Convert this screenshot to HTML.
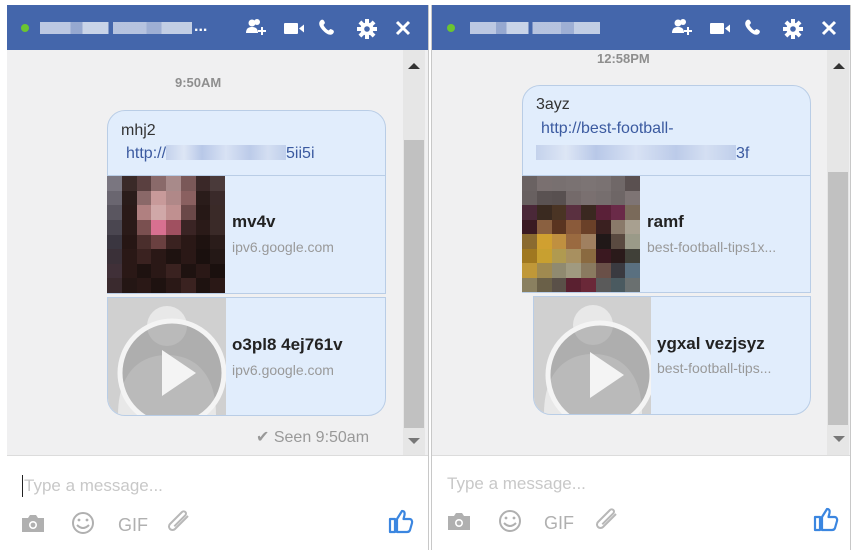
<!DOCTYPE html>
<html><head><meta charset="utf-8"><style>
*{margin:0;padding:0;box-sizing:border-box}
body{width:857px;height:550px;background:#fff;position:relative;overflow:hidden;font-family:"Liberation Sans",Arial,sans-serif}
.a{position:absolute}
.hdr{background:#4466ab;height:45px;top:5px}
.dot{width:8px;height:8px;border-radius:50%;background:#6bc531;top:24px}
.blur{height:12px;top:22px;background:linear-gradient(90deg,#c9d3e8 0 20%,#9fb0d4 20% 28%,#d8e0ef 28% 45%,#4466ab 45% 48%,#c2cde5 48% 70%,#a8b7d8 70% 80%,#d0d9eb 80%);opacity:.9}
.body{background:#f0f0f1;top:50px;height:405px}
.inp{background:#fff;top:455px;height:95px;border-top:1px solid #dcdcdc}
.bub{background:#e1edfc;border:1px solid #b9cde6}
.t{font-size:16px;color:#333}
.lnk{font-size:16px;color:#3b5aa0}
.ttl{font-size:17px;font-weight:bold;color:#222}
.dom{font-size:14px;color:#999}
.ts{font-size:13px;font-weight:bold;color:#8e8e8e}
.sb{background:#e6e6e6;width:22px}
.thumb{background:#c1c1c1}
.ph{font-size:17px;color:#c8c8c8}
.vid{background:#d0d0d0;overflow:hidden}
.pix{display:grid;grid-template-columns:repeat(8,1fr);overflow:hidden}
.pix div{width:100%;height:100%}
.bl{background:linear-gradient(90deg,#c4d2ec,#dde6f5 15%,#b8c8e8 30%,#d8e2f4 50%,#bccbe9 70%,#d4dff2 85%,#c0cfeb)}
</style></head><body>

<!-- LEFT PANEL -->
<div class="a hdr" style="left:7px;width:421px"></div>
<div class="a dot" style="left:21px"></div>
<div class="a blur" style="left:40px;width:152px"></div>
<div class="a" style="left:194px;top:18px;color:#fff;font-weight:bold;font-size:16px">...</div>
<svg class="a" style="left:244px;top:17px" width="180" height="24" viewBox="0 0 180 24">
 <g fill="#fff">
 <circle cx="8" cy="6" r="3.5"/><path d="M2 16c0-5 3-6 6-6s6 1 6 6z"/><circle cx="13" cy="5" r="3"/><rect x="14" y="13" width="8" height="2"/><rect x="17" y="10" width="2" height="8"/>
 <rect x="40" y="6" width="14" height="11" rx="1"/><path d="M55 11.5l5-4v8z"/>
 <path d="M77 3c2-1 3 0 4 3l-1.5 2c1 2 3 4.5 5 5.5l2-1.5c3 1 4 2 3 4-2 3-6 2-10-2s-6-8-2.5-11z"/>
 <g transform="translate(123,12)"><circle r="6.5"/><rect x="-2" y="-10" width="4" height="20"/><rect x="-10" y="-2" width="20" height="4"/><g transform="rotate(45)"><rect x="-2" y="-10" width="4" height="20"/><rect x="-10" y="-2" width="20" height="4"/></g></g>
 </g>
 <circle cx="123" cy="12" r="2.8" fill="#4466ab"/>
 <path d="M153 5l12 12M165 5l-12 12" stroke="#fff" stroke-width="3"/>
</svg>
<div class="a body" style="left:7px;width:421px"></div>
<div class="a ts" style="left:175px;top:75px">9:50AM</div>
<div class="a sb" style="left:403px;top:50px;height:405px"></div>
<div class="a thumb" style="left:404px;top:140px;width:20px;height:288px"></div>
<svg class="a" style="left:408px;top:62px" width="12" height="8"><path d="M0 7L6 1L12 7z" fill="#333"/></svg>
<svg class="a" style="left:408px;top:437px" width="12" height="8"><path d="M0 1L6 7L12 1z" fill="#777"/></svg>

<div class="a bub" style="left:107px;top:110px;width:279px;height:67px;border-radius:18px 18px 0 0"></div>
<div class="a t" style="left:121px;top:122px">mhj2</div>
<div class="a lnk" style="left:126px;top:145px">http://<span class="bl" style="display:inline-block;width:120px;height:15px;vertical-align:-2px"></span>5ii5i</div>
<div class="a bub" style="left:107px;top:175px;width:279px;height:119px"></div>
<div class="a pix" style="left:107px;top:176px;width:118px;height:117px;grid-template-rows:repeat(8,1fr)">
<div style="background:#7a7680"></div><div style="background:#3a2a28"></div><div style="background:#5a4040"></div><div style="background:#8a6a6a"></div><div style="background:#a88a8a"></div><div style="background:#7a5858"></div><div style="background:#3a2828"></div><div style="background:#4a3a3a"></div>
<div style="background:#6a6670"></div><div style="background:#2a1c1a"></div><div style="background:#8a6868"></div><div style="background:#c89a9a"></div><div style="background:#b08888"></div><div style="background:#8a6060"></div><div style="background:#2a1c1a"></div><div style="background:#3a2a2a"></div>
<div style="background:#5a5660"></div><div style="background:#2a1a18"></div><div style="background:#b08080"></div><div style="background:#d0a8a8"></div><div style="background:#c09090"></div><div style="background:#6a4848"></div><div style="background:#261816"></div><div style="background:#3a2a28"></div>
<div style="background:#4a4650"></div><div style="background:#2a1a18"></div><div style="background:#7a5050"></div><div style="background:#d87090"></div><div style="background:#a05060"></div><div style="background:#3a2424"></div><div style="background:#2a1a18"></div><div style="background:#3a2a28"></div>
<div style="background:#3a3640"></div><div style="background:#261614"></div><div style="background:#4a2e2c"></div><div style="background:#6a4040"></div><div style="background:#3a2220"></div><div style="background:#2a1816"></div><div style="background:#1e1210"></div><div style="background:#2a1c1a"></div>
<div style="background:#3a3038"></div><div style="background:#2a1816"></div><div style="background:#3a2220"></div><div style="background:#2a1816"></div><div style="background:#1e1210"></div><div style="background:#2a1816"></div><div style="background:#1a100e"></div><div style="background:#241816"></div>
<div style="background:#403038"></div><div style="background:#2a1816"></div><div style="background:#1e1210"></div><div style="background:#2a1816"></div><div style="background:#3a2220"></div><div style="background:#1e1210"></div><div style="background:#2a1816"></div><div style="background:#1a100e"></div>
<div style="background:#3a2a2e"></div><div style="background:#241614"></div><div style="background:#2a1816"></div><div style="background:#1e1210"></div><div style="background:#2a1816"></div><div style="background:#3a2220"></div><div style="background:#1e1210"></div><div style="background:#2a1816"></div>
</div>
<div class="a ttl" style="left:232px;top:212px">mv4v</div>
<div class="a dom" style="left:232px;top:239px">ipv6.google.com</div>

<div class="a bub" style="left:107px;top:297px;width:279px;height:119px;border-radius:0 0 18px 18px"></div>
<div class="a vid" style="left:108px;top:298px;width:118px;height:117px;border-radius:0 0 0 17px">
 <svg width="118" height="117"><circle cx="59" cy="28" r="20" fill="#e8e8e8"/><path d="M10 117c0-40 20-60 49-60s49 20 49 60z" fill="#e8e8e8"/>
 <circle cx="64" cy="75" r="52" fill="rgba(140,140,140,.5)" stroke="#f4f4f4" stroke-width="5"/><path d="M54 52v46l34-23z" fill="#f4f4f4"/></svg>
</div>
<div class="a ttl" style="left:232px;top:335px">o3pl8 4ej761v</div>
<div class="a dom" style="left:232px;top:362px">ipv6.google.com</div>
<div class="a" style="left:256px;top:427px;font-size:16px;color:#999">✔ Seen 9:50am</div>

<div class="a inp" style="left:7px;width:421px"></div>
<div class="a" style="left:22px;top:475px;width:1px;height:22px;background:#222"></div>
<div class="a ph" style="left:24px;top:476px">Type a message...</div>
<svg class="a" style="left:20px;top:510px" width="180" height="26">
 <g fill="#b0b0b0"><path d="M2 8h6l2-3h6l2 3h6v14H2z"/></g><circle cx="13" cy="15" r="4" fill="#fff"/><circle cx="13" cy="15" r="2.4" fill="#b0b0b0"/>
 <circle cx="63" cy="13" r="10" fill="none" stroke="#b0b0b0" stroke-width="2"/><circle cx="59" cy="10" r="1.4" fill="#b0b0b0"/><circle cx="67" cy="10" r="1.4" fill="#b0b0b0"/><path d="M57 15q6 6 12 0" fill="none" stroke="#b0b0b0" stroke-width="2"/>
 <text x="98" y="21" font-family="Liberation Sans Narrow,Liberation Sans,sans-serif" font-size="18" fill="#b0b0b0">GIF</text>
 <path d="M168 6l-13 13a3.5 3.5 0 0 1-5-5l12-12a2.3 2.3 0 0 1 3.3 3.3l-11 11" fill="none" stroke="#b8b8b8" stroke-width="2"/>
</svg>
<svg class="a" style="left:388px;top:508px" width="26" height="26"><path d="M2 11h5v13H2zM9 11l5-8c2 0 3 1 2.5 4l-1 4h6c2 0 3 2 2.5 4l-2 7c-.5 1.5-1.5 2-3 2H9z" fill="none" stroke="#3b86e0" stroke-width="2.2" stroke-linejoin="round"/></svg>
<div class="a" style="left:428px;top:5px;width:1px;height:545px;background:#c8c8c8"></div>

<!-- RIGHT PANEL -->
<div class="a" style="left:431px;top:5px;width:1px;height:545px;background:#c8c8c8"></div>
<div class="a hdr" style="left:432px;width:418px"></div>
<div class="a dot" style="left:447px"></div>
<div class="a blur" style="left:470px;width:130px"></div>
<svg class="a" style="left:670px;top:17px" width="180" height="24" viewBox="0 0 180 24">
 <g fill="#fff">
 <circle cx="8" cy="6" r="3.5"/><path d="M2 16c0-5 3-6 6-6s6 1 6 6z"/><circle cx="13" cy="5" r="3"/><rect x="14" y="13" width="8" height="2"/><rect x="17" y="10" width="2" height="8"/>
 <rect x="40" y="6" width="14" height="11" rx="1"/><path d="M55 11.5l5-4v8z"/>
 <path d="M77 3c2-1 3 0 4 3l-1.5 2c1 2 3 4.5 5 5.5l2-1.5c3 1 4 2 3 4-2 3-6 2-10-2s-6-8-2.5-11z"/>
 <g transform="translate(123,12)"><circle r="6.5"/><rect x="-2" y="-10" width="4" height="20"/><rect x="-10" y="-2" width="20" height="4"/><g transform="rotate(45)"><rect x="-2" y="-10" width="4" height="20"/><rect x="-10" y="-2" width="20" height="4"/></g></g>
 </g>
 <circle cx="123" cy="12" r="2.8" fill="#4466ab"/>
 <path d="M153 5l12 12M165 5l-12 12" stroke="#fff" stroke-width="3"/>
</svg>
<div class="a body" style="left:432px;width:418px"></div>
<div class="a ts" style="left:597px;top:51px">12:58PM</div>
<div class="a sb" style="left:827px;top:50px;height:405px"></div>
<div class="a thumb" style="left:828px;top:172px;width:20px;height:253px"></div>
<svg class="a" style="left:833px;top:62px" width="12" height="8"><path d="M0 7L6 1L12 7z" fill="#333"/></svg>
<svg class="a" style="left:833px;top:435px" width="12" height="8"><path d="M0 1L6 7L12 1z" fill="#777"/></svg>

<div class="a bub" style="left:522px;top:85px;width:289px;height:92px;border-radius:18px 18px 0 0"></div>
<div class="a t" style="left:536px;top:96px">3ayz</div>
<div class="a lnk" style="left:541px;top:120px">http://best-football-</div>
<div class="a lnk" style="left:536px;top:145px"><span class="bl" style="display:inline-block;width:200px;height:15px;vertical-align:-2px"></span>3f</div>
<div class="a bub" style="left:522px;top:175px;width:289px;height:118px"></div>
<div class="a pix" style="left:522px;top:176px;width:118px;height:116px;grid-template-rows:repeat(8,1fr)">
<div style="background:#6a6262"></div><div style="background:#7a7070"></div><div style="background:#787070"></div><div style="background:#7a7272"></div><div style="background:#7c7474"></div><div style="background:#7a7272"></div><div style="background:#706868"></div><div style="background:#5a5050"></div>
<div style="background:#686060"></div><div style="background:#5a5252"></div><div style="background:#585050"></div><div style="background:#746a6a"></div><div style="background:#7a7070"></div><div style="background:#766e6e"></div><div style="background:#6e6666"></div><div style="background:#7e7474"></div>
<div style="background:#4a2838"></div><div style="background:#3a2a20"></div><div style="background:#4a3424"></div><div style="background:#5a3040"></div><div style="background:#3a2820"></div><div style="background:#5a2038"></div><div style="background:#6a2a48"></div><div style="background:#7a6a5a"></div>
<div style="background:#3a1a22"></div><div style="background:#8a6040"></div><div style="background:#5a3420"></div><div style="background:#8a5a3a"></div><div style="background:#6a4028"></div><div style="background:#3a2020"></div><div style="background:#8a7a6a"></div><div style="background:#a8a090"></div>
<div style="background:#8a6a30"></div><div style="background:#d0a030"></div><div style="background:#c09040"></div><div style="background:#9a6a40"></div><div style="background:#a08060"></div><div style="background:#201818"></div><div style="background:#5a4a40"></div><div style="background:#9a9a88"></div>
<div style="background:#a07820"></div><div style="background:#c8a030"></div><div style="background:#b09a50"></div><div style="background:#a89060"></div><div style="background:#8a6a40"></div><div style="background:#3a1820"></div><div style="background:#2a1a1a"></div><div style="background:#404038"></div>
<div style="background:#c09838"></div><div style="background:#a08a50"></div><div style="background:#908a70"></div><div style="background:#a09a80"></div><div style="background:#8a7a60"></div><div style="background:#6a5048"></div><div style="background:#3a3a40"></div><div style="background:#5a7080"></div>
<div style="background:#8a8060"></div><div style="background:#6a6048"></div><div style="background:#5a5048"></div><div style="background:#5a2030"></div><div style="background:#6a2838"></div><div style="background:#5a5a5a"></div><div style="background:#4a5a60"></div><div style="background:#6a7070"></div>
</div>
<div class="a ttl" style="left:647px;top:212px">ramf</div>
<div class="a dom" style="left:647px;top:239px">best-football-tips1x...</div>

<div class="a bub" style="left:533px;top:296px;width:278px;height:119px;border-radius:0 0 18px 18px"></div>
<div class="a vid" style="left:534px;top:297px;width:117px;height:117px;border-radius:0 0 0 17px">
 <svg width="118" height="117"><circle cx="59" cy="28" r="20" fill="#e8e8e8"/><path d="M10 117c0-40 20-60 49-60s49 20 49 60z" fill="#e8e8e8"/>
 <circle cx="66" cy="78" r="52" fill="rgba(140,140,140,.5)" stroke="#f4f4f4" stroke-width="5"/><path d="M56 55v46l34-23z" fill="#f4f4f4"/></svg>
</div>
<div class="a ttl" style="left:657px;top:334px">ygxal vezjsyz</div>
<div class="a dom" style="left:657px;top:360px">best-football-tips...</div>

<div class="a inp" style="left:432px;width:418px"></div>
<div class="a ph" style="left:447px;top:474px">Type a message...</div>
<svg class="a" style="left:446px;top:508px" width="180" height="26">
 <g fill="#b0b0b0"><path d="M2 8h6l2-3h6l2 3h6v14H2z"/></g><circle cx="13" cy="15" r="4" fill="#fff"/><circle cx="13" cy="15" r="2.4" fill="#b0b0b0"/>
 <circle cx="64" cy="13" r="10" fill="none" stroke="#b0b0b0" stroke-width="2"/><circle cx="60" cy="10" r="1.4" fill="#b0b0b0"/><circle cx="68" cy="10" r="1.4" fill="#b0b0b0"/><path d="M58 15q6 6 12 0" fill="none" stroke="#b0b0b0" stroke-width="2"/>
 <text x="98" y="21" font-family="Liberation Sans Narrow,Liberation Sans,sans-serif" font-size="18" fill="#b0b0b0">GIF</text>
 <path d="M170 6l-13 13a3.5 3.5 0 0 1-5-5l12-12a2.3 2.3 0 0 1 3.3 3.3l-11 11" fill="none" stroke="#b8b8b8" stroke-width="2"/>
</svg>
<svg class="a" style="left:813px;top:506px" width="26" height="26"><path d="M2 11h5v13H2zM9 11l5-8c2 0 3 1 2.5 4l-1 4h6c2 0 3 2 2.5 4l-2 7c-.5 1.5-1.5 2-3 2H9z" fill="none" stroke="#3b86e0" stroke-width="2.2" stroke-linejoin="round"/></svg>
<div class="a" style="left:850px;top:5px;width:1px;height:545px;background:#c8c8c8"></div>
</body></html>
